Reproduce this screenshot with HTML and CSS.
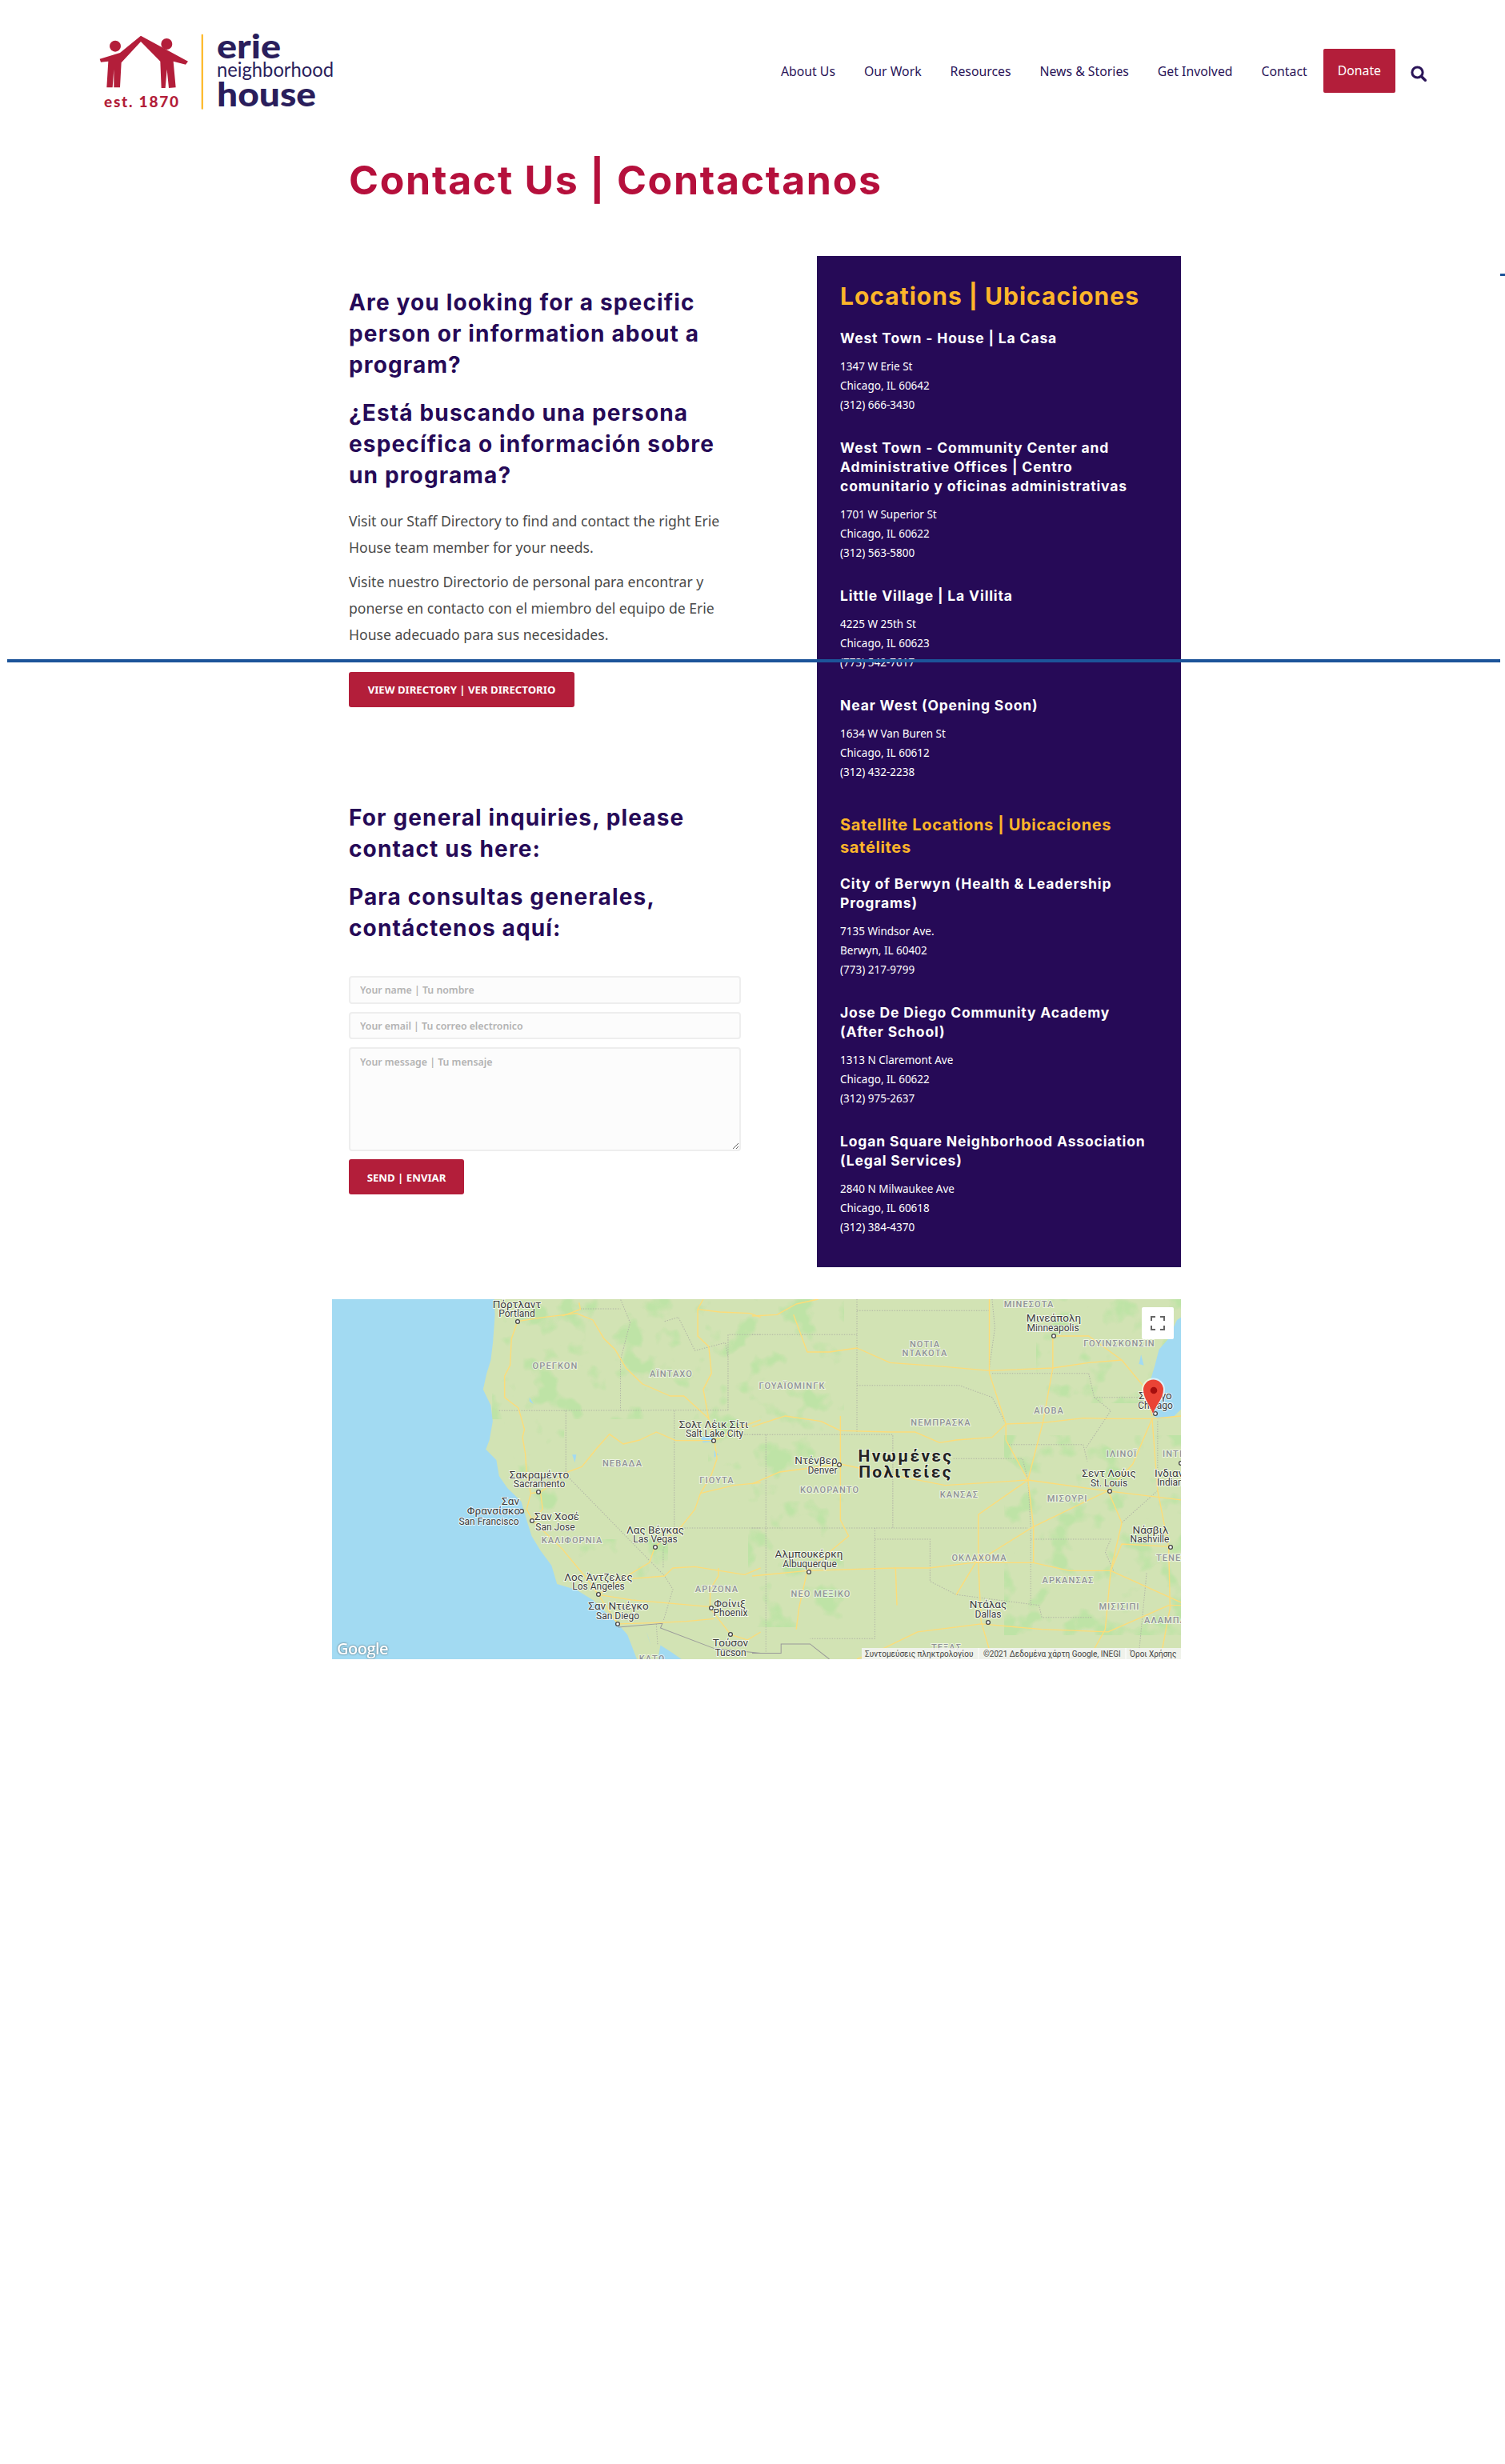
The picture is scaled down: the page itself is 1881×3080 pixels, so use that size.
FILE: index.html
```html
<!DOCTYPE html>
<html lang="en">
<head>
    <meta charset="UTF-8">
    <meta name="viewport" content="width=device-width, initial-scale=1.0">
    <title>Contact Us | Contactanos</title>
    <link rel="stylesheet" href="styles.css">
</head>
<body>
    <!-- stray guide lines that sit over the page -->
    <div class="guide guide-long"></div>
    <div class="guide guide-tick"></div>

    <header class="site-header">
        <a class="logo" href="#">
            <svg viewBox="0 0 400 130" width="400" height="130">
                <g transform="scale(.3333)">
                    <path class="logo-red" d="M228 74 L405 170 L396 182 L350 170 L359 268 L333 270 L326 200 L320 270 L305 270 L301 170 L228 96 L155 175 L150 268 L127 268 L127 200 L122 268 L100 268 L106 170 L78 173 L74 161 L150 138 Z"/>
                    <circle class="logo-red" cx="132" cy="113" r="21"/>
                    <circle class="logo-red" cx="325" cy="105" r="21"/>
                    <rect class="logo-bar" x="455" y="68" width="7" height="282" rx="3"/>
                </g>
                <text class="logo-est" x="30" y="114" textLength="93">est. 1870</text>
                <text class="logo-big" x="171" y="53" textLength="80" lengthAdjust="spacingAndGlyphs">erie</text>
                <text class="logo-mid" x="171" y="76" textLength="146" lengthAdjust="spacingAndGlyphs">neighborhood</text>
                <text class="logo-big" x="171" y="113" textLength="124" lengthAdjust="spacingAndGlyphs">house</text>
            </svg>
        </a>
        <nav class="main-nav">
            <a href="#">About Us</a>
            <a href="#">Our Work</a>
            <a href="#">Resources</a>
            <a href="#">News &amp; Stories</a>
            <a href="#">Get Involved</a>
            <a class="nav-last" href="#">Contact</a>
            <a class="donate" href="#">Donate</a>
            <svg class="search" viewBox="0 0 20 20" width="20" height="20">
                <circle cx="8.5" cy="8.5" r="6.6" fill="none" stroke="#2a1458" stroke-width="3"/>
                <path d="M13.2 13.2 L18.4 18.4" stroke="#2a1458" stroke-width="3.4" stroke-linecap="round"/>
            </svg>
        </nav>
    </header>

    <main class="page">
        <h1>Contact Us | Contactanos</h1>

        <div class="columns">
            <div class="col-left">
                <h2>Are you looking for a specific<br>person or information about a<br>program?</h2>
                <h2>¿Está buscando una persona<br>específica o información sobre<br>un programa?</h2>
                <p>Visit our Staff Directory to find and contact the right Erie<br>House team member for your needs.</p>
                <p>Visite nuestro Directorio de personal para encontrar y<br>ponerse en contacto con el miembro del equipo de Erie<br>House adecuado para sus necesidades.</p>
                <a class="btn btn-directory" href="#">View Directory | Ver Directorio</a>

                <div class="inquiries">
                    <h2>For general inquiries, please<br>contact us here:</h2>
                    <h2>Para consultas generales,<br>contáctenos aquí:</h2>
                </div>

                <form class="contact-form">
                    <input type="text" placeholder="Your name | Tu nombre">
                    <input type="email" placeholder="Your email | Tu correo electronico">
                    <textarea placeholder="Your message | Tu mensaje"></textarea>
                    <button class="btn btn-send" type="button">Send | Enviar</button>
                </form>
            </div>

            <aside class="locations">
                <h3>Locations | Ubicaciones</h3>
                <div class="loc">
                    <h4>West Town - House | La Casa</h4>
                    <p>1347 W Erie St<br>Chicago, IL 60642<br>(312) 666-3430</p>
                </div>
                <div class="loc">
                    <h4>West Town - Community Center and Administrative Offices | Centro comunitario y oficinas administrativas</h4>
                    <p>1701 W Superior St<br>Chicago, IL 60622<br>(312) 563-5800</p>
                </div>
                <div class="loc">
                    <h4>Little Village | La Villita</h4>
                    <p>4225 W 25th St<br>Chicago, IL 60623<br>(773) 542-7617</p>
                </div>
                <div class="loc">
                    <h4>Near West (Opening Soon)</h4>
                    <p>1634 W Van Buren St<br>Chicago, IL 60612<br>(312) 432-2238</p>
                </div>
                <h5>Satellite Locations | Ubicaciones satélites</h5>
                <div class="loc">
                    <h4>City of Berwyn (Health &amp; Leadership<br>Programs)</h4>
                    <p>7135 Windsor Ave.<br>Berwyn, IL 60402<br>(773) 217-9799</p>
                </div>
                <div class="loc">
                    <h4>Jose De Diego Community Academy<br>(After School)</h4>
                    <p>1313 N Claremont Ave<br>Chicago, IL 60622<br>(312) 975-2637</p>
                </div>
                <div class="loc">
                    <h4>Logan Square Neighborhood Association<br>(Legal Services)</h4>
                    <p>2840 N Milwaukee Ave<br>Chicago, IL 60618<br>(312) 384-4370</p>
                </div>
            </aside>
        </div>

        <div class="map">
            <svg viewBox="0 0 1061 450" width="1061" height="450">
                <defs>
                    <filter id="mottle" x="0" y="0" width="100%" height="100%" color-interpolation-filters="sRGB">
                        <feTurbulence type="fractalNoise" baseFrequency=".028" numOctaves="3" seed="7"/>
                        <feColorMatrix values="0 0 0 0 .745  0 0 0 0 .89  0 0 0 0 .65  7 0 0 0 -3.900"/>
                        <feComposite in2="SourceAlpha" operator="in"/>
                    </filter>
                </defs>
                <rect class="land" width="1061" height="450"/>

                <!-- forest patches, only where the map has them -->
                <g filter="url(#mottle)">
                    <rect x="200" y="0" width="330" height="150"/>
                    <rect x="215" y="150" width="75" height="130"/>
                    <rect x="290" y="300" width="130" height="50"/>
                    <rect x="470" y="0" width="170" height="260"/>
                    <rect x="520" y="260" width="120" height="150"/>
                    <rect x="880" y="0" width="181" height="130"/>
                    <rect x="840" y="170" width="221" height="250"/>
                </g>

                <!-- west half, drawn in the crop's own units -->
                <g transform="translate(-5,-14) scale(.3448,.3333)">
                    <path class="water" d="M0 0 L600 0 L605 100 L598 200 L590 270 L575 320 L562 380 L590 440 L597 500 L585 570 L572 605 L610 645 L620 705 L650 750 L700 800 L720 870 L738 930 L770 985 L810 1040 L830 1110 L900 1132 L960 1170 L1000 1210 L1055 1265 L1085 1300 L1130 1420 L0 1420 Z"/>
                    <path class="water" d="M1320 1420 L1250 1370 L1205 1340 L1195 1395 L1215 1420 Z"/>
                    <path class="water" d="M1155 1290 L1170 1340 L1160 1310 Z"/>
                    <path class="water" d="M1350 560 L1390 550 L1395 575 L1360 580 Z M885 625 L900 625 L895 655 Z M730 410 L745 435 L730 425 Z M1400 610 L1415 625 L1400 635 Z"/>
                    <g class="border">
                        <path d="M620 460 L1450 458"/>
                        <path d="M862 460 L862 700 L1220 1080 L1250 1130 L1215 1250"/>
                        <path d="M1060 460 L1060 270 L1095 130 L1060 42"/>
                        <path d="M915 78 L1060 78"/>
                        <path d="M1255 460 L1255 900 L1568 900"/>
                        <path d="M1255 900 L1215 980 L1215 1050"/>
                        <path d="M1450 458 L1450 175 L1568 175"/>
                        <path d="M1500 550 L1568 550"/>
                        <path d="M1220 125 L1270 110 L1330 235 L1440 205 L1450 260"/>
                        <path d="M1190 1260 L1195 1340"/>
                    </g>
                    <path class="mexico" d="M1052 1272 L1212 1258 L1205 1275 L1400 1352 L1568 1370"/>
                    <g class="road">
                        <path d="M687 125 L665 190 L660 290 L640 330 L640 410 L690 450 L712 530 L705 560 L715 620 L720 700 L735 770 L720 830 L740 870 L850 980 L930 1080 L980 1150 L1050 1260"/>
                        <path d="M735 770 L770 765 L778 830 L740 870"/>
                        <path d="M687 125 L780 110 L860 100 L900 95 L960 120 L1000 190 L1040 230 L1080 300 L1140 360 L1240 405 L1290 405 L1380 490 L1400 570"/>
                        <path d="M770 765 L870 690 L920 670 L975 600 L1020 548 L1070 585 L1130 570 L1190 540 L1260 572 L1400 572 L1500 520 L1568 495"/>
                        <path d="M1400 570 L1410 640 L1390 700 L1350 770 L1330 830 L1280 895 L1185 970 L1165 1030 L1100 1070 L980 1150"/>
                        <path d="M980 1150 L1100 1170 L1380 1195 L1460 1300 L1520 1320 L1568 1290"/>
                        <path d="M1100 1090 L1220 1080 L1250 1050 L1330 1045 L1510 1075 L1568 1050"/>
                        <path d="M1050 1260 L1200 1255 L1300 1250 L1400 1240"/>
                        <path d="M1385 1200 L1385 1130 L1415 1080 L1415 1050"/>
                        <path d="M850 105 L915 80 L910 55"/>
                        <path d="M1360 42 L1340 80 L1420 90 L1530 95 L1568 110"/>
                        <path d="M1340 80 L1340 180 L1380 220 L1390 320 L1360 380 L1380 490"/>
                        <path d="M1568 730 L1470 740 L1350 770"/>
                    </g>
                </g>

                <!-- east half -->
                <g transform="translate(525,-14) scale(.3448,.3333)">
                    <path class="water" d="M1510 190 L1540 120 L1570 100 L1570 440 L1530 480 L1470 492 L1450 470 L1440 360 L1460 290 L1475 230 Z"/>
                    <path class="water" d="M1410 250 L1420 290 L1402 285 Z"/>
                    <g class="border">
                        <path d="M380 42 L380 540"/>
                        <path d="M0 175 L380 175"/>
                        <path d="M380 85 L860 85"/>
                        <path d="M380 365 L750 365 L870 410 L920 510"/>
                        <path d="M0 550 L510 550 L510 900"/>
                        <path d="M50 550 L50 1370"/>
                        <path d="M0 900 L1000 900"/>
                        <path d="M445 900 L445 1315 L210 1315"/>
                        <path d="M445 942 L645 942 L645 1100 L740 1150 L1040 1190 L1050 1235 L1230 1235"/>
                        <path d="M1010 900 L1010 1190"/>
                        <path d="M730 640 L980 640 L1000 720 L1010 900"/>
                        <path d="M870 320 L1220 320 L1240 410 L1300 460 L1210 600"/>
                        <path d="M930 587 L1200 587 L1215 650"/>
                        <path d="M1010 942 L1300 942 L1280 990 L1310 1060"/>
                        <path d="M1240 410 L1460 410"/>
                        <path d="M1470 500 L1470 760 L1340 880"/>
                        <path d="M1430 1070 L1400 1392"/>
                        <path d="M870 42 L880 150 L860 300"/>
                    </g>
                    <path class="mexico" d="M0 1370 L105 1370 L105 1335 L210 1335 L280 1392"/>
                    <g class="road">
                        <path d="M0 520 L120 480 L250 500 L320 535 L500 540 L590 540 L680 580 L740 570 L870 560 L920 510 L1055 505 L1200 488 L1300 490 L1450 490 L1556 480"/>
                        <path d="M0 105 L90 100 L160 60 L240 42"/>
                        <path d="M150 100 L200 240 L280 240 L380 225 L500 280 L700 295 L860 310 L1090 300 L1220 280 L1340 270"/>
                        <path d="M320 480 L320 660 L320 870 L350 930 L200 1060 L170 1200 L160 1280"/>
                        <path d="M0 735 L100 690 L320 660 L500 700 L700 740 L1000 720 L1280 760 L1556 795"/>
                        <path d="M1090 180 L1090 300 L1055 500 L1000 720 L820 850 L820 1030 L830 1250 L870 1392"/>
                        <path d="M0 1080 L200 1060 L520 1050 L640 1050 L800 1030 L1020 1030 L1150 1060 L1300 1060 L1340 960 L1520 970"/>
                        <path d="M380 1392 L480 1350 L600 1290 L830 1260 L1050 1280 L1290 1290 L1510 1190 L1556 1190"/>
                        <path d="M1450 490 L1380 660 L1290 760 L1340 880 L1300 1060 L1280 1280 L1220 1392"/>
                        <path d="M1290 760 L1130 840 L1020 895 L810 1030 L740 1150"/>
                        <path d="M1450 490 L1470 760 L1510 970 L1515 1200 L1480 1392"/>
                        <path d="M1090 180 L1220 180 L1340 270 L1420 370 L1450 480"/>
                        <path d="M860 42 L860 320 L920 510 L920 570 L1000 720"/>
                        <path d="M520 1050 L525 1190"/>
                        <path d="M1000 720 L1020 895 L1020 1030"/>
                        <path d="M1300 1060 L1556 1180"/>
                    </g>
                </g>

                <!-- state names -->
                <g class="state" text-anchor="middle">
                    <text x="279" y="87">ΟΡΕΓΚΟΝ</text>
                    <text x="424" y="97">ΑΪΝΤΑΧΟ</text>
                    <text x="363" y="209">ΝΕΒΑΔΑ</text>
                    <text x="481" y="230">ΓΙΟΥΤΑ</text>
                    <text x="300" y="305">ΚΑΛΙΦΟΡΝΙΑ</text>
                    <text x="481" y="366">ΑΡΙΖΟΝΑ</text>
                    <text x="400" y="453">ΚΑΤΩ</text>
                    <text x="871" y="10">ΜΙΝΕΣΟΤΑ</text>
                    <text x="741" y="60">ΝΟΤΙΑ</text>
                    <text x="741" y="71">ΝΤΑΚΟΤΑ</text>
                    <text x="984" y="59">ΓΟΥΙΝΣΚΟΝΣΙΝ</text>
                    <text x="575" y="112">ΓΟΥΑΪΟΜΙΝΓΚ</text>
                    <text x="896" y="143">ΑΪΟΒΑ</text>
                    <text x="761" y="158">ΝΕΜΠΡΑΣΚΑ</text>
                    <text x="622" y="242">ΚΟΛΟΡΑΝΤΟ</text>
                    <text x="784" y="248">ΚΑΝΣΑΣ</text>
                    <text x="919" y="253">ΜΙΣΟΥΡΙ</text>
                    <text x="987" y="197">ΙΛΙΝΟΪ</text>
                    <text x="611" y="372">ΝΕΟ ΜΕΞΙΚΟ</text>
                    <text x="809" y="327">ΟΚΛΑΧΟΜΑ</text>
                    <text x="920" y="355">ΑΡΚΑΝΣΑΣ</text>
                    <text x="984" y="388">ΜΙΣΙΣΙΠΙ</text>
                    <text x="768" y="439">ΤΕΞΑΣ</text>
                    <text x="1038" y="197" text-anchor="start">ΙΝΤΙΑΝΑ</text>
                    <text x="1030" y="327" text-anchor="start">ΤΕΝΕΣΙ</text>
                    <text x="1015" y="405" text-anchor="start">ΑΛΑΜΠΑΜΑ</text>
                </g>

                <text class="country" x="717" y="203" text-anchor="middle">Ηνωμένες</text>
                <text class="country" x="717" y="223" text-anchor="middle">Πολιτείες</text>

                <!-- towns -->
                <g class="dots">
                    <circle cx="232" cy="28" r="2.4"/><circle cx="258" cy="241" r="2.4"/><circle cx="237" cy="265" r="2.4"/>
                    <circle cx="250" cy="277" r="2.4"/><circle cx="404" cy="310" r="2.4"/><circle cx="333" cy="369" r="2.4"/>
                    <circle cx="357" cy="406" r="2.4"/><circle cx="474" cy="386" r="2.4"/><circle cx="498" cy="419" r="2.4"/>
                    <circle cx="477" cy="177" r="2.4"/><circle cx="902" cy="46" r="2.4"/><circle cx="634" cy="207" r="2.4"/>
                    <circle cx="972" cy="240" r="2.4"/><circle cx="1048" cy="310" r="2.4"/><circle cx="1029" cy="143" r="2.4"/>
                    <circle cx="596" cy="341" r="2.4"/><circle cx="820" cy="404" r="2.4"/><circle cx="1061" cy="205" r="2.4"/>
                </g>
                <g class="city" text-anchor="middle">
                    <text class="el" x="231" y="11">Πόρτλαντ</text><text x="231" y="22">Portland</text>
                    <text class="el" x="259" y="224">Σακραμέντο</text><text x="259" y="235">Sacramento</text>
                    <text class="el" x="223" y="257">Σαν</text><text class="el" x="202" y="269">Φρανσίσκο</text><text x="196" y="282">San Francisco</text>
                    <text class="el" x="281" y="276">Σαν Χοσέ</text><text x="279" y="289">San Jose</text>
                    <text class="el" x="404" y="293">Λας Βέγκας</text><text x="404" y="304">Las Vegas</text>
                    <text class="el" x="333" y="352">Λος Άντζελες</text><text x="333" y="363">Los Angeles</text>
                    <text class="el" x="358" y="388">Σαν Ντιέγκο</text><text x="357" y="400">San Diego</text>
                    <text class="el" x="497" y="385">Φοίνιξ</text><text x="498" y="396">Phoenix</text>
                    <text class="el" x="498" y="434">Τούσον</text><text x="498" y="446">Tucson</text>
                    <text class="el" x="477" y="161">Σολτ Λέικ Σίτι</text><text x="478" y="172">Salt Lake City</text>
                    <text class="el" x="902" y="28">Μινεάπολη</text><text x="901" y="40">Minneapolis</text>
                    <text class="el" x="605" y="206">Ντένβερ</text><text x="613" y="218">Denver</text>
                    <text class="el" x="971" y="222">Σεντ Λούις</text><text x="971" y="234">St. Louis</text>
                    <text class="el" x="1023" y="293">Νάσβιλ</text><text x="1022" y="304">Nashville</text>
                    <text class="el" x="1029" y="125">Σικάγο</text><text x="1029" y="137">Chicago</text>
                    <text class="el" x="596" y="323">Αλμπουκέρκη</text><text x="597" y="335">Albuquerque</text>
                    <text class="el" x="820" y="386">Ντάλας</text><text x="820" y="398">Dallas</text>
                    <text class="el" x="1028" y="222" text-anchor="start">Ινδιανάπολη</text><text x="1031" y="233" text-anchor="start">Indianapolis</text>
                </g>

                <!-- marker -->
                <path class="pin-halo" d="M1026 144 C1022 132 1012 125 1012 113 A14.500 14.500 0 0 1 1041 113 C1041 125 1030 132 1026 144 Z"/>
                <path class="pin" d="M1026 143 C1022 132 1014 124 1014 113 A12.500 12.500 0 0 1 1039 113 C1039 124 1030 132 1026 143 Z"/>
                <circle class="pin-dot" cx="1027" cy="114" r="4.300"/>

                <!-- fullscreen control -->
                <rect class="fs-box" x="1012" y="10" width="40" height="40" rx="2"/>
                <path class="fs-icon" d="M1024 27 V22 H1029 M1035 22 H1040 V27 M1040 33 V38 H1035 M1029 38 H1024 V33"/>

                <text class="google" x="6" y="444">Google</text>

                <!-- attribution -->
                <rect class="attr-bg" x="662" y="436" width="399" height="14"/>
                <path class="attr-sep" d="M808 436 V450 M992 436 V450"/>
                <text class="attr" x="666" y="447">Συντομεύσεις πληκτρολογίου</text>
                <text class="attr" x="814" y="447">©2021 Δεδομένα χάρτη Google, INEGI</text>
                <text class="attr" x="997" y="447">Όροι Χρήσης</text>
            </svg>
        </div>
    </main>
</body>
</html>
```

FILE: styles.css
```css
body {
    position: relative;
    margin: 0;
    min-height: 3080px;
    background: #fff;
    color: #4a4a4a;
    font-family: "Noto Sans", "Open Sans", sans-serif;
}

a {
    text-decoration: none;
}

.guide {
    position: absolute;
    background-color: #1c5499;
}

.guide-long {
    left: 9px;
    top: 824px;
    width: 1866px;
    height: 4px;
    z-index: 5;
}

.guide-tick {
    left: 1875px;
    top: 342px;
    width: 6px;
    height: 3px;
}

/* header */
.site-header {
    display: flex;
    justify-content: space-between;
    height: 130px;
    padding: 20px 98px 0 100px;
}

.logo svg {
    display: block;
}

.logo-red {
    fill: #b31e3a;
}

.logo-bar {
    fill: #fdbb30;
}

.logo-est {
    fill: #b31e3a;
    font-family: "Lato", sans-serif;
    font-size: 19px;
    font-weight: 900;
}

.logo-big {
    fill: #2a1e5c;
    font-family: "Lato", sans-serif;
    font-size: 41px;
    font-weight: 900;
}

.logo-mid {
    fill: #2a1e5c;
    font-family: "Lato", sans-serif;
    font-size: 25px;
}

.main-nav {
    display: flex;
    align-items: center;
    gap: 36px;
    height: 55px;
    margin-top: 41px;
    font-size: 15.800px;
}

.main-nav a {
    color: #2a1458;
}

.main-nav .nav-last {
    margin-right: -16px;
}

.main-nav .donate {
    padding: 0 18px;
    line-height: 55px;
    background-color: #b31e3a;
    border-radius: 2px;
    color: #fff;
}

.search {
    margin: 6px 0 0 -17px;
}

/* page body */
.page {
    width: 1040px;
    margin-left: 436px;
}

h1 {
    margin: 0 0 20px;
    height: 150px;
    color: #b5103c;
    font-family: "Inter", sans-serif;
    font-size: 50px;
    font-weight: 700;
    line-height: 150px;
    letter-spacing: 1.700px;
}

.columns {
    display: flex;
    justify-content: space-between;
    align-items: flex-start;
}

.col-left {
    width: 490px;
    padding-top: 39px;
}

h2 {
    margin: 0 0 21px;
    color: #260a57;
    font-family: "Inter", sans-serif;
    font-size: 28px;
    font-weight: 700;
    line-height: 39px;
    letter-spacing: 1.150px;
}

.col-left p {
    margin: 0 0 10px;
    font-size: 17.600px;
    line-height: 33px;
}

.btn {
    display: block;
    box-sizing: border-box;
    height: 44px;
    background-color: #b31e3a;
    border: 0;
    border-radius: 3px;
    color: #fff;
    font-family: "Noto Sans", sans-serif;
    font-size: 13.200px;
    font-weight: 700;
    line-height: 44px;
    text-align: center;
    text-transform: uppercase;
}

.btn-directory {
    width: 282px;
    margin-top: 30px;
}

.inquiries {
    margin-top: 119px;
}

.contact-form {
    display: flex;
    flex-direction: column;
    gap: 10px;
    margin-top: 40px;
}

.contact-form input,
.contact-form textarea {
    box-sizing: border-box;
    width: 490px;
    padding: 8px 12px;
    background-color: #fcfcfc;
    border: 2px solid #eee;
    border-radius: 4px;
    font-family: "Noto Sans", sans-serif;
    font-size: 12.300px;
    font-weight: 600;
}

.contact-form input {
    height: 35px;
}

.contact-form input + input {
    height: 34px;
}

.contact-form textarea {
    height: 130px;
}

.contact-form ::placeholder {
    color: #b3b3b3;
    opacity: 1;
}

.btn-send {
    width: 144px;
}

/* locations panel */
.locations {
    box-sizing: border-box;
    width: 455px;
    height: 1264px;
    padding: 30px 29px 0;
    background-color: #260a57;
    color: #fff;
}

.locations h3 {
    margin: 0 0 21px;
    color: #fdb52a;
    font-family: "Inter", sans-serif;
    font-size: 30px;
    font-weight: 700;
    line-height: 40px;
    letter-spacing: 1px;
}

.locations h4 {
    margin: 0 0 11px;
    font-family: "Inter", sans-serif;
    font-size: 17.500px;
    font-weight: 700;
    line-height: 24px;
    letter-spacing: .85px;
}

.locations h5 {
    margin: 40px 0 20px;
    color: #fdb52a;
    font-family: "Inter", sans-serif;
    font-size: 20px;
    font-weight: 700;
    line-height: 28px;
    letter-spacing: .65px;
}

.locations p {
    margin: 0;
    font-size: 13.500px;
    line-height: 24px;
}

.loc {
    margin-bottom: 30px;
}

/* map */
.map {
    width: 1061px;
    height: 450px;
    margin: 40px 0 0 -21px;
}

.map svg {
    display: block;
    overflow: hidden;
}

.land {
    fill: #d2e3b4;
}

.water {
    fill: #a2daf2;
}

.border path {
    fill: none;
    stroke: #b0b3a5;
    stroke-width: 3;
    stroke-dasharray: 4 5;
}

.mexico {
    fill: none;
    stroke: #9a9a9a;
    stroke-width: 3;
}

.road path {
    fill: none;
    stroke: #fddc78;
    stroke-width: 4;
    stroke-linejoin: round;
}

.state text {
    fill: #8f9296;
    stroke: #fff;
    stroke-width: 2px;
    stroke-opacity: .6;
    paint-order: stroke;
    font-family: "Roboto", sans-serif;
    font-size: 11px;
    font-weight: 500;
    letter-spacing: 1.100px;
}

.country {
    fill: #222;
    stroke: #fff;
    stroke-width: 2px;
    stroke-opacity: .6;
    paint-order: stroke;
    font-family: "Roboto", sans-serif;
    font-size: 21px;
    font-weight: 700;
    letter-spacing: 2.300px;
}

.dots circle {
    fill: #fff;
    stroke: #444;
    stroke-width: 1.300;
}

.city text {
    fill: #3c3c3c;
    stroke: #fff;
    stroke-width: 2px;
    stroke-opacity: .75;
    paint-order: stroke;
    font-family: "Roboto", sans-serif;
    font-size: 12px;
}

.city .el {
    font-size: 13.500px;
}

.pin-halo {
    fill: #fff;
    fill-opacity: .6;
}

.pin {
    fill: #ea4335;
}

.pin-dot {
    fill: #a50e0e;
}

.fs-box {
    fill: #fff;
}

.fs-icon {
    fill: none;
    stroke: #666;
    stroke-width: 2;
}

.google {
    fill: #fff;
    filter: drop-shadow(0 0 1px rgba(0, 0, 0, .55));
    font-family: "Open Sans", sans-serif;
    font-size: 20px;
    font-weight: 600;
    letter-spacing: -.5px;
}

.attr-bg {
    fill: #f5f5f5;
    fill-opacity: .85;
}

.attr-sep {
    stroke: #fff;
}

.attr {
    fill: #444;
    font-family: "Roboto", sans-serif;
    font-size: 10px;
}
```
